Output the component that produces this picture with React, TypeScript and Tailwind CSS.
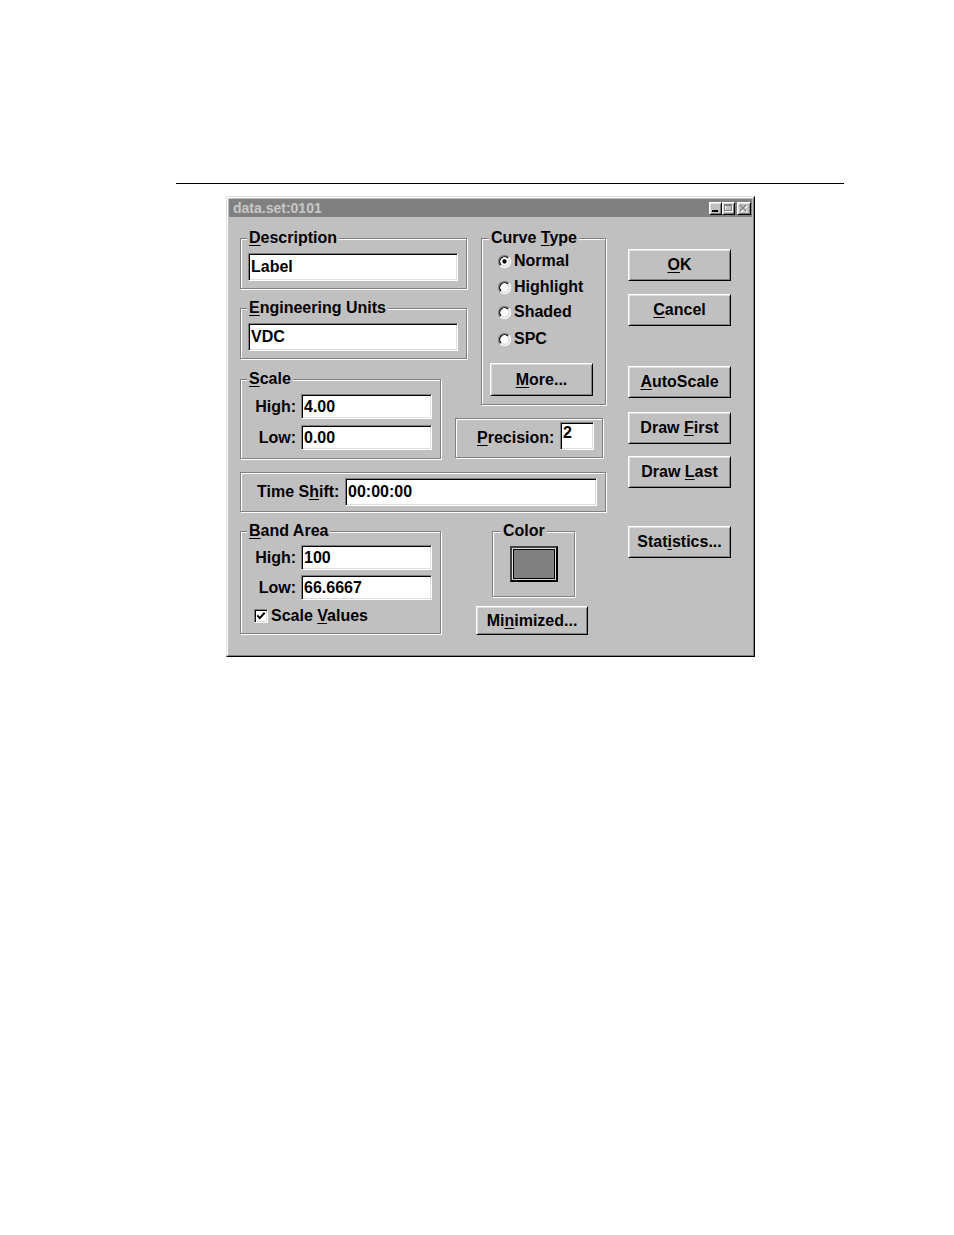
import React from "react";

// win95-ish bevels
const raised =
  "border border-t-white border-l-white border-r-black border-b-black shadow-[inset_1px_1px_0_#dfdfdf,inset_-1px_-1px_0_#808080]";
const sunken =
  "border border-t-[#808080] border-l-[#808080] border-r-white border-b-white shadow-[inset_1px_1px_0_#000,inset_-1px_-1px_0_#dfdfdf]";
const etched = "border border-[#808080] shadow-[1px_1px_0_#fff,inset_1px_1px_0_#fff]";

function U({ children }: { children: React.ReactNode }) {
  return <span className="underline decoration-1 underline-offset-[2px]">{children}</span>;
}

function Group({
  label,
  className = "",
  labelClass = "ml-[6px]",
  children,
}: {
  label?: React.ReactNode;
  className?: string;
  labelClass?: string;
  children?: React.ReactNode;
}) {
  return (
    <div className={`${etched} ${className}`}>
      {label && (
        <div className={`-mt-[10px] ${labelClass} w-fit px-[2px] bg-[#c0c0c0] leading-[18px]`}>
          {label}
        </div>
      )}
      {children}
    </div>
  );
}

function Btn({ children, className = "" }: { children: React.ReactNode; className?: string }) {
  return (
    <div className={`${raised} bg-[#c0c0c0] flex items-center justify-center leading-none ${className}`}>
      {children}
    </div>
  );
}

function Field({ value, className = "" }: { value: string; className?: string }) {
  return (
    <div className={`${sunken} bg-white flex items-center pl-[2px] leading-none ${className}`}>
      {value}
    </div>
  );
}

function Radio({ checked }: { checked?: boolean }) {
  return (
    <svg width="13" height="13" viewBox="0 0 12 12" className="shrink-0">
      <circle cx="6" cy="6" r="4.2" fill="#fff" />
      <path d="M2.11 9.89 A5.5 5.5 0 0 1 9.89 2.11" fill="none" stroke="#808080" strokeWidth="1.1" />
      <path d="M9.89 2.11 A5.5 5.5 0 0 1 2.11 9.89" fill="none" stroke="#fff" strokeWidth="1.1" />
      <path d="M2.82 9.18 A4.5 4.5 0 0 1 9.18 2.82" fill="none" stroke="#000" strokeWidth="1.1" />
      <path d="M9.18 2.82 A4.5 4.5 0 0 1 2.82 9.18" fill="none" stroke="#dfdfdf" strokeWidth="1.1" />
      {checked && <circle cx="6" cy="6" r="2" fill="#000" />}
    </svg>
  );
}

function LabeledField({ label, value, gapTop }: { label: string; value: string; gapTop: string }) {
  return (
    <div className={`flex items-center ${gapTop}`}>
      <div className="w-[55px] text-right leading-none">{label}</div>
      <Field value={value} className="ml-[5px] w-[131px] h-[25px]" />
    </div>
  );
}

export default function App() {
  const radios = [
    { label: "Normal", checked: true, mt: "mt-[4px]" },
    { label: "Highlight", mt: "mt-[6px]" },
    { label: "Shaded", mt: "mt-[5px]" },
    { label: "SPC", mt: "mt-[7px]" },
  ];

  return (
    <div className="w-[954px] h-[1235px] bg-white font-['Liberation_Sans',Arial,sans-serif] font-bold text-[16px] text-black">
      <div className="pt-[183px] pl-[176px]">
        <div className="w-[668px] h-px bg-black" />
      </div>

      {/* dialog */}
      <div className="ml-[226px] mt-[12px] w-[529px] h-[461px] border border-t-[#dfdfdf] border-l-[#dfdfdf] border-r-black border-b-black">
        <div className="h-full border border-t-white border-l-white border-r-[#808080] border-b-[#808080] bg-[#c0c0c0] p-[1px]">
          {/* title bar */}
          <div className="h-[18px] bg-[#808080] flex items-center justify-between">
            <span className="pl-[4px] text-[14px] leading-none text-[#c8c8c8]">data.set:0101</span>
            <div className="flex items-center pr-[1px]">
              <div className={`${raised} bg-[#c0c0c0] w-[13px] h-[13px]`}>
                <svg width="11" height="11" viewBox="0 0 11 11">
                  <rect x="2" y="7" width="6" height="2" fill="#000" />
                </svg>
              </div>
              <div className={`${raised} bg-[#c0c0c0] w-[13px] h-[13px]`}>
                <svg width="11" height="11" viewBox="0 0 11 11">
                  <rect x="2.5" y="2.5" width="7" height="6" fill="none" stroke="#fff" />
                  <rect x="1.5" y="1.5" width="7" height="6" fill="none" stroke="#808080" />
                  <rect x="1" y="1" width="8" height="2" fill="#808080" />
                </svg>
              </div>
              <div className={`${raised} bg-[#c0c0c0] w-[14px] h-[13px] ml-[2px]`}>
                <svg width="12" height="11" viewBox="0 0 12 11">
                  <path d="M3 3 L9 9 M9 3 L3 9" stroke="#fff" strokeWidth="1.5" />
                  <path d="M2 2 L8 8 M8 2 L2 8" stroke="#808080" strokeWidth="1.5" />
                </svg>
              </div>
            </div>
          </div>

          {/* body */}
          <div className="flex pt-[21px] pl-[11px]">
            <div className="w-[366px]">
              <div className="flex items-start">
                {/* left column */}
                <div className="w-[227px] flex flex-col">
                  <Group label={<><U>D</U>escription</>} className="w-[227px] h-[51px]">
                    <Field value="Label" className="ml-[7px] mt-[6px] w-[210px] h-[28px]" />
                  </Group>
                  <Group label={<><U>E</U>ngineering Units</>} className="mt-[19px] w-[227px] h-[51px]">
                    <Field value="VDC" className="ml-[7px] mt-[6px] w-[210px] h-[28px]" />
                  </Group>
                  <Group label={<><U>S</U>cale</>} className="mt-[20px] w-[201px] h-[80px]">
                    <LabeledField label="High:" value="4.00" gapTop="mt-[6px]" />
                    <LabeledField label="Low:" value="0.00" gapTop="mt-[6px]" />
                  </Group>
                </div>

                {/* curve type / precision */}
                <div className="ml-[14px] w-[125px] flex flex-col">
                  <Group label={<>Curve <U>T</U>ype</>} labelClass="ml-[7px]" className="w-[125px] h-[167px]">
                    <div className="ml-[16px]">
                      {radios.map((r) => (
                        <div key={r.label} className={`h-[20px] flex items-center gap-[3px] ${r.mt}`}>
                          <Radio checked={r.checked} />
                          <span className="leading-none">{r.label}</span>
                        </div>
                      ))}
                    </div>
                    <Btn className="ml-[8px] mt-[14px] w-[103px] h-[33px]">
                      <span><U>M</U>ore...</span>
                    </Btn>
                  </Group>
                  <Group className="-ml-[26px] mt-[13px] w-[148px] h-[40px] flex items-center pb-[4px] pl-[21px]">
                    <div className="w-[83px] leading-none pt-[4px]">
                      <U>P</U>recision:
                    </div>
                    <Field value="2" className="w-[34px] h-[28px] items-start pt-[2px]" />
                  </Group>
                </div>
              </div>

              {/* time shift */}
              <Group className="mt-[13px] w-[366px] h-[40px] flex items-center pl-[16px]">
                <div className="w-[88px] leading-none">
                  Time S<U>h</U>ift:
                </div>
                <Field value="00:00:00" className="w-[252px] h-[28px]" />
              </Group>

              {/* band area / color */}
              <div className="flex items-start mt-[19px]">
                <Group label={<><U>B</U>and Area</>} className="w-[201px] h-[103px]">
                  <LabeledField label="High:" value="100" gapTop="mt-[5px]" />
                  <LabeledField label="Low:" value="66.6667" gapTop="mt-[5px]" />
                  <div className="mt-[7px] ml-[13px] h-[18px] flex items-center gap-[3px]">
                    <div className={`${sunken} bg-white w-[14px] h-[14px] flex items-center justify-center`}>
                      <svg width="10" height="10" viewBox="0 0 9 9">
                        <polyline points="1.2,4 3.4,6.4 7.8,1.6" fill="none" stroke="#000" strokeWidth="1.8" />
                      </svg>
                    </div>
                    <span className="leading-none">
                      Scale <U>V</U>alues
                    </span>
                  </div>
                </Group>

                <div className="ml-[35px] flex flex-col">
                  <Group label="Color" labelClass="ml-[8px]" className="ml-[16px] w-[83px] h-[66px]">
                    <div className="mx-auto mt-[6px] w-[48px] h-[36px] border-2 border-t-[#404040] border-l-[#404040] border-r-black border-b-black bg-[#dcdcdc] p-[1px]">
                      <div className="w-full h-full border border-black bg-[#808080]" />
                    </div>
                  </Group>
                  <Btn className="mt-[9px] w-[112px] h-[29px]">
                    <span>
                      Mi<U>n</U>imized...
                    </span>
                  </Btn>
                </div>
              </div>
            </div>

            {/* right buttons */}
            <div className="ml-[22px] mt-[11px] w-[103px] flex flex-col">
              <Btn className="h-[32px]">
                <U>O</U>K
              </Btn>
              <Btn className="mt-[13px] h-[32px]">
                <span><U>C</U>ancel</span>
              </Btn>
              <Btn className="mt-[40px] h-[32px]">
                <span><U>A</U>utoScale</span>
              </Btn>
              <Btn className="mt-[14px] h-[32px]">
                <span>Draw <U>F</U>irst</span>
              </Btn>
              <Btn className="mt-[12px] h-[32px]">
                <span>Draw <U>L</U>ast</span>
              </Btn>
              <Btn className="mt-[38px] h-[32px]">
                <span>Stat<U>i</U>stics...</span>
              </Btn>
            </div>
          </div>
        </div>
      </div>
    </div>
  );
}
